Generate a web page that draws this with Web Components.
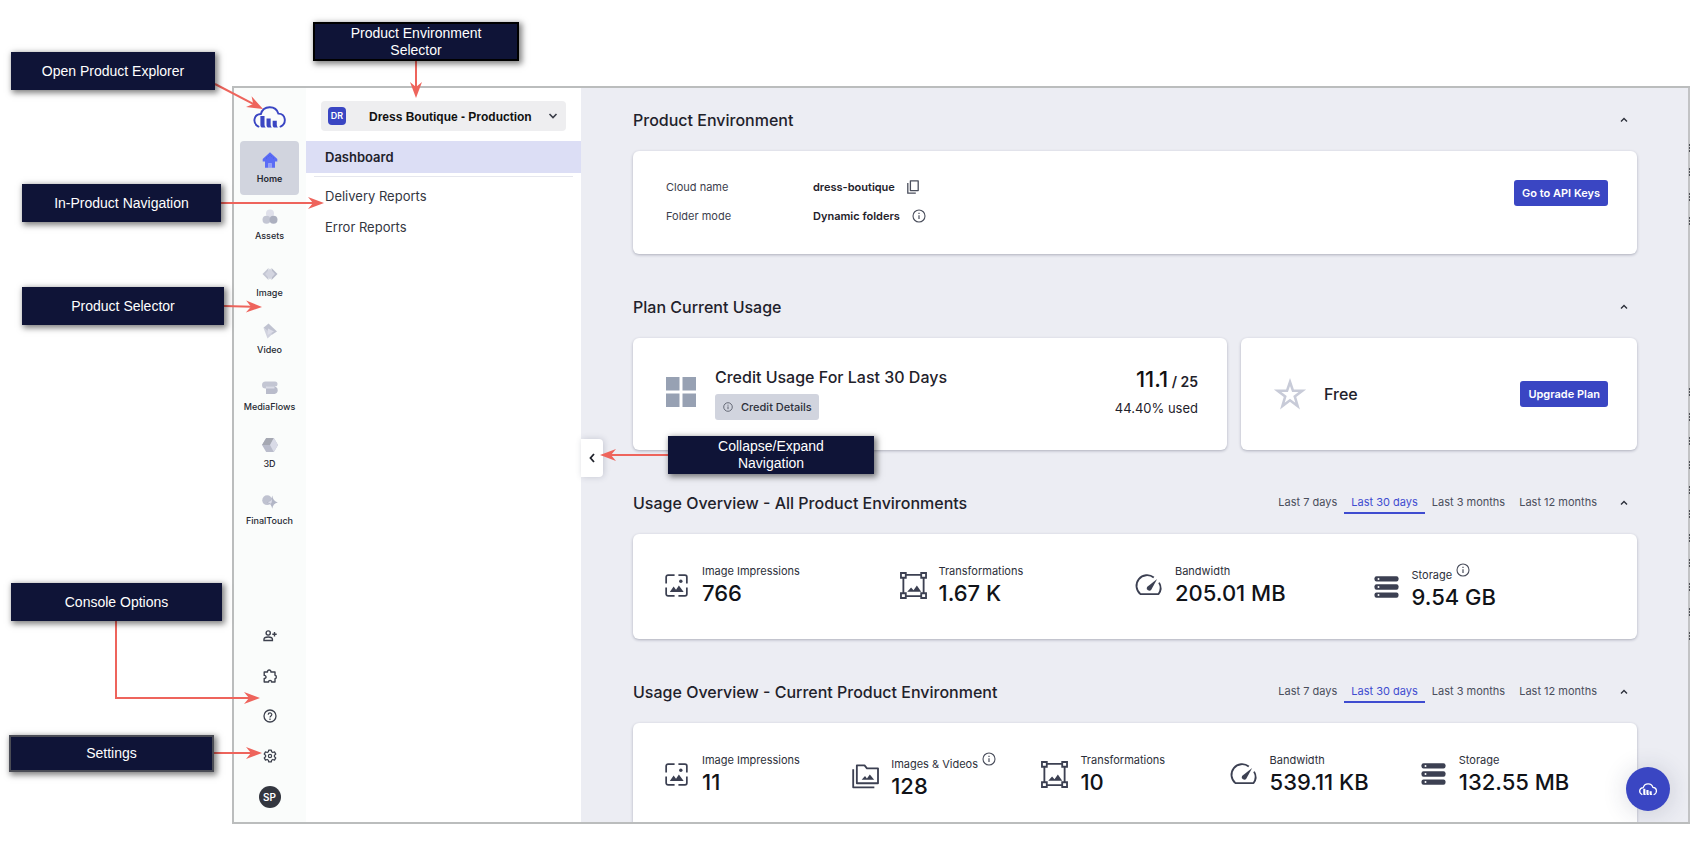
<!DOCTYPE html>
<html lang="en">
<head>
<meta charset="utf-8">
<title>Console dashboard guide</title>
<style>
  body { margin: 0; background: #fff; font-family: Inter, "Liberation Sans", sans-serif; color: #1f222b; }
</style>
</head>
<body>
<guide-stage>
  <app-frame>
    <side-rail slot="rail"></side-rail>
    <nav-panel slot="nav"></nav-panel>
    <section-block heading="Product Environment">
      <info-card><environment-details></environment-details></info-card>
    </section-block>
    <section-block heading="Plan Current Usage">
      <card-row>
        <info-card><credit-usage></credit-usage></info-card>
        <info-card><plan-summary></plan-summary></info-card>
      </card-row>
    </section-block>
    <section-block heading="Usage Overview - All Product Environments">
      <period-tabs slot="tools"></period-tabs>
      <info-card>
        <stat-grid>
          <stat-item icon="impressions" label="Image Impressions" value="766"></stat-item>
          <stat-item icon="transform" label="Transformations" value="1.67 K"></stat-item>
          <stat-item icon="gauge" label="Bandwidth" value="205.01 MB"></stat-item>
          <stat-item icon="storage" label="Storage" value="9.54 GB" info></stat-item>
        </stat-grid>
      </info-card>
    </section-block>
    <section-block heading="Usage Overview - Current Product Environment">
      <period-tabs slot="tools"></period-tabs>
      <info-card>
        <stat-grid>
          <stat-item icon="impressions" label="Image Impressions" value="11"></stat-item>
          <stat-item icon="folder" label="Images &amp; Videos" value="128" info></stat-item>
          <stat-item icon="transform" label="Transformations" value="10"></stat-item>
          <stat-item icon="gauge" label="Bandwidth" value="539.11 KB"></stat-item>
          <stat-item icon="storage" label="Storage" value="132.55 MB"></stat-item>
        </stat-grid>
      </info-card>
    </section-block>
  </app-frame>

  <call-out slot="notes" box="11 52 204 38" path="215,84 263,109">Open Product Explorer</call-out>
  <call-out slot="notes" box="313 22 206 39" edge="#000" path="416,61 416,98">Product Environment Selector</call-out>
  <call-out slot="notes" box="22 184 199 38" path="221,203 324,203">In-Product Navigation</call-out>
  <call-out slot="notes" box="22 287 202 38" path="224,306 262,307">Product Selector</call-out>
  <call-out slot="notes" box="11 583 211 38" path="116,621 116,698 260,698">Console Options</call-out>
  <call-out slot="notes" box="9 735 205 37" edge="#4a4c55" path="214,753 262,753">Settings</call-out>
  <call-out slot="notes" box="668 436 206 38" path="668,455 600,455">Collapse/Expand Navigation</call-out>
</guide-stage>

<script>
const ICONS = {
  logo: ['0 0 34 24', `<g fill="none" stroke="#3a46c3" stroke-width="2" stroke-linecap="round"><path d="M5.500 21.500C-1 18 .2 8.800 8 8.400 10.500-.8 23.500-1.200 26.300 8 34.500 8.300 35 18.500 28.500 21.500"/></g><g fill="#3a46c3"><path d="M7.500 10.500h4.300v9q0 1.400 1.200 3H8.700q-1.200-1-1.200-2.500z"/><path d="M13.900 13h4.300v6.500q0 1.400 1.200 3h-4.300q-1.200-1-1.200-2.500z"/><path d="M20.300 15.300h4.300v4.200q0 1.400 1.200 3h-4.300q-1.200-1-1.200-2.500z"/></g>`],
  cloud: ['0 0 34 24', `<path d="M5.500 21.500C-1 18 .2 8.800 8 8.400 10.500-.8 23.500-1.200 26.300 8 34.500 8.300 35 18.500 28.500 21.500" fill="none" stroke="#fff" stroke-width="2.400" stroke-linecap="round"/><g fill="#fff"><path d="M8 10.500h4v9q0 1.400 1.200 3H9q-1-1-1-2.500z"/><path d="M14 13h4v6.500q0 1.400 1.200 3H15q-1-1-1-2.500z"/><path d="M20 15.300h4v4.200q0 1.400 1.200 3H21q-1-1-1-2.500z"/></g>`],
  home: ['0 0 16 16', `<path d="M8 .3 15.300 7v2.600H13V15.800H9.600v-4.600H6.400v4.600H3V9.600H.7V7z" fill="#5b6cf5"/><path d="M6.400 11.200h3.200v4.600H6.400z" fill="#8f9bfa"/><path d="M4 6.500 8 3l4 3.500" fill="none" stroke="#4050d8" stroke-width=".8" stroke-dasharray="1 1.400"/>`],
  assets: ['0 0 16 16', `<circle cx="8" cy="4.500" r="4" fill="#dfe0ea"/><circle cx="4.500" cy="10.800" r="4" fill="#c3c6d3"/><circle cx="11.500" cy="10.800" r="4" fill="#acb0bf"/>`],
  image: ['0 0 16 16', `<path d="M6.500 2v12L.5 8z" fill="#c3c6d3"/><path d="M9.500 2v12l6-6z" fill="#b7bac9"/><path d="m8 2.500 5 5.500L8 13.500 3 8z" fill="#d3d5e0"/>`],
  video: ['0 0 16 16', `<path d="M6.500.5 15 8.500 9.500 12 1.500 4.800z" fill="#bfc2d0"/><path d="M1.500 4.800 10.500 11 5.500 15.500z" fill="#d0d2de"/><path d="M6 5.500 12 8.500 5.500 12z" fill="#dcdde8"/>`],
  media: ['0 0 16 16', `<path d="M3.500 1.500H13a2 2 0 0 1 0 5L12.500 8.500h-9A3.500 3.500 0 0 1 3.500 1.500z" fill="#c3c6d3"/><path d="M4 8.500l1-2h7.500a3.800 3.800 0 0 1 0 7.500H4z" fill="#b9bccb"/><path d="M4 6.500h8.500v2H4z" fill="#dadce6"/>`],
  cube: ['0 0 16 16', `<path d="M4.200 1h7.600L16 8l-4.200 7H4.200L0 8z" fill="#b9bccb"/><path d="M4.200 1h7.600L8 8H0z" fill="#a5a8b2"/><path d="M11.800 1 16 8l-4.200 7L8 8z" fill="#d9dbe7"/>`],
  touch: ['0 0 18 16', `<circle cx="5.800" cy="6" r="5.500" fill="#bfc2d0"/><path d="M11.500.8q.8 6.200 6.300 7.700-5.500 1-6.300 7.200-.8-6.200-6.300-7.200 5.500-1.500 6.300-7.700z" fill="#b2b6c6"/><path d="M6.500 8.200Q10 7 11 4.500q.6 3-1 5.500z" fill="#dcdde8"/>`],
  addUser: ['0 0 14 12', `<g fill="none" stroke="#3c404d" stroke-width="1.400"><circle cx="5.200" cy="3" r="2.100"/><path d="M1 10.500V9.200C1 7.600 3.600 7 5.200 7s4.200.6 4.200 2.200v1.300z"/><path d="M11.500 2v4.400M9.300 4.200h4.400"/></g>`],
  puzzle: ['0 0 14 14', `<path d="M1.200 3h3.300C4.100.4 8.300.4 7.900 3H12v3.300c1.800.1 1.800 3.300 0 3.400V13H8.500c.2-2.200-3-2.200-2.900 0H1.200V9.500c2.400.2 2.400-3.200 0-3.100z" fill="none" stroke="#3c404d" stroke-width="1.400" stroke-linejoin="round"/>`],
  help: ['0 0 14 14', `<circle cx="7" cy="7" r="6" fill="none" stroke="#3c404d" stroke-width="1.300"/><path d="M5.200 5.700c0-2.300 3.600-2.300 3.600-.1C8.800 7 7 7 7 8.500M7 9.600v1.300" fill="none" stroke="#3c404d" stroke-width="1.200"/>`],
  gear: ['0 0 24 24', `<path d="M9.800 1.800h4.400l.6 3 2 1.200 2.900-1 2.200 3.800-2.300 2v2.400l2.300 2-2.200 3.800-2.900-1-2 1.200-.6 3H9.800l-.6-3-2-1.200-2.900 1-2.200-3.800 2.300-2v-2.400l-2.300-2L4.300 5l2.900 1 2-1.200z" fill="none" stroke="#3c404d" stroke-width="2.200" stroke-linejoin="round"/><circle cx="12" cy="12" r="2.800" fill="none" stroke="#3c404d" stroke-width="2"/>`],
  down: ['0 0 10 6', `<path d="M1.500 1 5 4.500 8.500 1" fill="none" stroke="#3a3d48" stroke-width="1.600"/>`],
  up: ['0 0 8 6', `<path d="M1 4.600 4 1.600 7 4.600" fill="none" stroke="#2c2f3a" stroke-width="1.400"/>`],
  left: ['0 0 6 10', `<path d="M5 1 1.500 5 5 9" fill="none" stroke="#1f222b" stroke-width="1.800"/>`],
  copy: ['0 0 12 14', `<path d="M3.400.8h7.800v9.800H3.400z" fill="none" stroke="#4a4e5c" stroke-width="1.300" stroke-linejoin="round"/><path d="M.8 3v10.200h8" fill="none" stroke="#4a4e5c" stroke-width="1.300"/>`],
  info: ['0 0 14 14', `<circle cx="7" cy="7" r="6" fill="none" stroke="#4a4e5c" stroke-width="1.100"/><path d="M7 6.200V10M7 3.800v1.300" fill="none" stroke="#4a4e5c" stroke-width="1.200"/>`],
  grid: ['0 0 30 30', `<path d="M0 0h13.500v13.500H0zM16.500 0H30v13.500H16.500zM0 16.500h13.500V30H0zM16.500 16.500H30V30H16.500z" fill="#97a1b3"/>`],
  star: ['0 0 30 30', `<path d="m15 3 3 8.800h9.300l-7.500 5.700 2.800 9.500L15 21.300 7.400 27l2.800-9.500L2.700 11.800H12z" fill="none" stroke="#c8cbd8" stroke-width="2.600"/>`],
  impressions: ['0 0 24 24', `<g fill="none" stroke="#3c4052" stroke-width="1.800"><path d="M1.200 10V3.200a2 2 0 0 1 2-2H10M14 1.200h6.800a2 2 0 0 1 2 2V10M22.800 14v6.800a2 2 0 0 1-2 2H14M10 22.800H3.200a2 2 0 0 1-2-2V14"/></g><path d="M5 18.700 9 13l2.500 3.500L14.500 12l5 6.700z" fill="#3c4052"/><circle cx="16.500" cy="7.500" r="1.800" fill="#3c4052"/>`],
  transform: ['0 0 28 28', `<g fill="none" stroke="#3c4052" stroke-width="1.900"><path d="M1 1h5v5H1zM22 1h5v5h-5zM1 22h5v5H1zM22 22h5v5h-5zM6 3h16M6 25h16M3.500 6v16M24.500 6v16"/></g><path d="M7.500 20.500 11.500 16l2.500 3 3.500-5 4.500 6.500z" fill="#3c4052"/>`],
  gauge: ['0 0 26 22', `<path d="M17.500 2.700A11 11 0 0 0 3.500 20h19A11 11 0 0 0 23 8" fill="none" stroke="#3c4052" stroke-width="1.900" stroke-linejoin="round"/><path d="M21 4.300 15 15.300a2.700 2.700 0 0 1-4.600-2.800z" fill="#3c4052"/>`],
  storage: ['0 0 24 22', `<g fill="#3c4052"><rect y=".2" width="24" height="5.400" rx="2"/><rect y="8.300" width="24" height="5.400" rx="2"/><rect y="16.400" width="24" height="5.400" rx="2"/></g><g fill="#fff"><circle cx="4" cy="2.900" r="1"/><circle cx="4" cy="11" r="1"/><circle cx="4" cy="19.100" r="1"/></g>`],
  folder: ['0 0 28 26', `<g fill="none" stroke="#3c4052" stroke-width="1.900" stroke-linejoin="round"><path d="M5 1.500h8l2.500 3H27v15.500H5z"/><path d="M1.200 5.500v18.800h22"/></g><path d="M10 16.500l3.500-4 2 2.500 3-4 4.500 5.500z" fill="#3c4052"/>`]
};

function define(name, css, render) {
  customElements.define(name, class extends HTMLElement {
    constructor() {
      super();
      this.attachShadow({ mode: 'open' });
    }
    connectedCallback() {
      const t = document.createElement('template');
      t.innerHTML = `<style>*{box-sizing:border-box}${css}</style>${render(this)}`;
      this.shadowRoot.replaceChildren(t.content.cloneNode(true));
    }
  });
}

const icon = (name, w, h) => `<ui-icon name="${name}" w="${w}" h="${h || w}"></ui-icon>`;

define('ui-icon', `:host{display:block;flex:none;line-height:0}svg{display:block;overflow:visible}`, el => {
  const [box, body] = ICONS[el.getAttribute('name')];
  return `<svg aria-hidden="true" viewBox="${box}" width="${el.getAttribute('w')}" height="${el.getAttribute('h')}">${body}</svg>`;
});

define('guide-stage', `
  :host{display:flex;flex-direction:column;position:relative;height:100vh;min-height:700px;box-sizing:border-box;padding:86px 0 40px 232px}
`, () => `<slot></slot><slot name="notes"></slot>`);

define('app-frame', `
  :host{display:flex;flex:1;min-height:0;position:relative;border:2px solid #bbbdbd;border-right:0;overflow:hidden;box-sizing:border-box}
  main{flex:1;min-width:0;background:#ecedf3;padding:20px 51px 0 52px;overflow:hidden;display:flex;flex-direction:column;gap:41px}
  .collapse{position:absolute;left:347px;top:351px;width:22px;height:38px;border:0;border-radius:0 4px 4px 0;background:#fff;display:grid;place-items:center;padding:0;box-shadow:1px 0 6px rgba(60,65,90,.22)}
  .help{position:absolute;right:20px;bottom:11px;width:44px;height:44px;border:0;border-radius:50%;background:#3a46c3;display:grid;place-items:center;padding:0;box-shadow:0 2px 24px rgba(40,45,80,.18)}
  .edge{width:2px;flex:none;background:#c2c3c5}
  .edge svg{display:block}
`, () => {
  const ticks = [60, 84, 109, 133, 304, 329, 353, 377, 402, 426, 450, 475, 499, 524, 548];
  return `<slot name="rail"></slot><slot name="nav"></slot><main><slot></slot></main>
  <div class="edge"><svg aria-hidden="true" width="2" height="600">${ticks.map(y => `<path d="M1.500 ${y - 4}v9" stroke="#505258" stroke-dasharray="2 1"/>`).join('')}</svg></div>
  <button class="collapse" aria-label="Collapse navigation">${icon('left', 6, 10)}</button>
  <button class="help" aria-label="Open assistant">${icon('cloud', 18, 13)}</button>`;
});

define('side-rail', `
  :host{display:flex;flex-direction:column;align-items:center;width:72px;flex:none;background:#fafcfb;box-sizing:border-box;padding:18px 7px 14px 6px}
  .logo{display:block;margin-bottom:12px}
  nav{display:flex;flex-direction:column;gap:3px;align-self:stretch}
  .options{margin-top:auto;display:flex;flex-direction:column;align-items:center;gap:16px}
  button{border:0;background:none;padding:0;width:24px;height:24px;display:grid;place-items:center}
  .avatar{background:#33363f;color:#fff;border-radius:50%;width:22px;height:22px;margin-top:2px;font:600 10px/22px Inter,sans-serif}
`, () => `
  <a class="logo" href="#explorer" aria-label="Open product explorer">${icon('logo', 33, 23)}</a>
  <nav aria-label="Products">
    <rail-item icon="home" active>Home</rail-item>
    <rail-item icon="assets">Assets</rail-item>
    <rail-item icon="image">Image</rail-item>
    <rail-item icon="video">Video</rail-item>
    <rail-item icon="media">MediaFlows</rail-item>
    <rail-item icon="cube">3D</rail-item>
    <rail-item icon="touch">FinalTouch</rail-item>
  </nav>
  <div class="options">
    <button aria-label="Invite users">${icon('addUser', 14, 12)}</button>
    <button aria-label="Integrations">${icon('puzzle', 14)}</button>
    <button aria-label="Help">${icon('help', 14)}</button>
    <button aria-label="Settings">${icon('gear', 14)}</button>
    <button class="avatar">SP</button>
  </div>`);

define('rail-item', `
  :host{display:block}
  a{display:flex;flex-direction:column;align-items:center;gap:4px;height:54px;padding-top:11px;border-radius:4px;color:#262932;text-decoration:none;font-weight:500;font-size:9px;line-height:14px;white-space:nowrap}
  :host([active]) a{background:#d1d4de;font-weight:600}
`, el => `<a href="#product">${icon(el.getAttribute('icon'), 16)}<slot></slot></a>`);

define('nav-panel', `
  :host{display:block;width:275px;flex:none;background:#fff;font-size:13px}
  .picker{display:flex;align-items:center;height:30px;margin:13px 15px 0;padding:0 8px 0 7px;border-radius:4px;background:#eeeef0}
  .badge{width:18px;height:18px;border-radius:4px;background:#3a46c3;color:#fff;font-weight:600;font-size:9px;line-height:18px;text-align:center}
  select{appearance:none;border:0;background:none;flex:1;min-width:0;margin:0;padding:2px 0 0 23px;font:bold 12px/18px "Liberation Sans",Arial,sans-serif;color:#111}
  ul{list-style:none;margin:10px 0 0;padding:0}
  a{display:block;line-height:31px;padding:0 19px;color:#33363f;text-decoration:none}
  .current a{line-height:32px;background:#dcdef5;font-weight:600;color:#1f222b}
  hr{border:0;height:1px;background:#e6e7ee;margin:3px 8px 4px}
`, () => `
  <label class="picker"><span class="badge">DR</span>
    <select aria-label="Product environment"><option>Dress Boutique - Production</option></select>${icon('down', 10, 6)}
  </label>
  <nav aria-label="Home"><ul>
    <li class="current"><a href="#dashboard" aria-current="page">Dashboard</a><hr></li>
    <li><a href="#delivery">Delivery Reports</a></li>
    <li><a href="#errors">Error Reports</a></li>
  </ul></nav>`);

define('section-block', `
  :host{display:block;flex:none}
  header{display:flex;align-items:center;height:24px;margin-bottom:19px}
  h2{margin:0 auto 0 0;font-weight:500;font-size:16px;line-height:24px;color:#1f222b}
  button{border:0;background:none;width:24px;height:24px;margin-right:1px;padding:0;display:grid;place-items:center}
`, el => `<header><h2>${el.getAttribute('heading')}</h2><slot name="tools"></slot><button aria-label="Collapse section">${icon('up', 8, 6)}</button></header><slot></slot>`);

define('info-card', `
  :host{display:block;background:#fff;border-radius:6px;box-shadow:0 1px 3px rgba(40,45,70,.32)}
`, () => `<slot></slot>`);

define('card-row', `
  :host{display:grid;grid-template-columns:3fr 2fr;gap:14px}
`, () => `<slot></slot>`);

const BUTTON = `.primary{border:0;border-radius:3px;background:#3a46c3;color:#fff;font:600 11px/26px Inter,sans-serif;padding:0 8px;white-space:nowrap}`;

define('environment-details', `
  :host{display:flex;align-items:flex-start;justify-content:space-between;padding:28px 29px 30px 33px;font-size:11px}
  dl{margin:0;display:grid;grid-template-columns:147px auto;row-gap:13px;line-height:16px}
  dt{color:#3c404d}
  dd{margin:0;font-weight:600;display:flex;gap:12px;align-items:center}
  button.plain{border:0;background:none;padding:0}
  .primary{margin-top:1px}
  ${BUTTON}
`, () => `
  <dl>
    <dt>Cloud name</dt><dd>dress-boutique <button class="plain" aria-label="Copy cloud name">${icon('copy', 12, 14)}</button></dd>
    <dt>Folder mode</dt><dd>Dynamic folders <button class="plain" aria-label="About folder mode">${icon('info', 14)}</button></dd>
  </dl>
  <button class="primary">Go to API Keys</button>`);

define('credit-usage', `
  :host{display:flex;align-items:center;height:112px;padding:0 29px 4px 33px;gap:19px;box-sizing:border-box}
  .title{flex:1;min-width:0}
  h3{margin:0 0 5px;font-weight:500;font-size:16px;line-height:24px;color:#1f222b}
  button{display:flex;align-items:center;gap:8px;border:0;border-radius:3px;background:#d1d4de;height:26px;padding:0 7px 0 8px;font:500 11px/26px Inter,sans-serif;color:#2c2f3a}
  .amount{text-align:right}
  .total{font-weight:600;font-size:14px;line-height:28px}
  .total b{font-weight:500;font-size:22px;color:#111}
  .used{font-size:13px;line-height:24px}
`, () => `
  ${icon('grid', 30)}
  <div class="title"><h3>Credit Usage For Last 30 Days</h3><button>${icon('info', 10)}Credit Details</button></div>
  <div class="amount"><div class="total"><b>11.1</b> / 25</div><div class="used">44.40% used</div></div>`);

define('plan-summary', `
  :host{display:flex;align-items:center;height:112px;padding:0 29px 0 34px;gap:19px;box-sizing:border-box}
  span{flex:1;font-weight:500;font-size:16px;line-height:24px;color:#1f222b}
  ${BUTTON}
`, () => `${icon('star', 30)}<span>Free</span><button class="primary">Upgrade Plan</button>`);

define('period-tabs', `
  :host{display:flex;margin-right:8px}
  a{display:block;padding:0 7px;font-size:11px;line-height:20px;color:#4a4e5c;text-decoration:none;border-bottom:2px solid transparent;white-space:nowrap}
  a[aria-current]{color:#3f4cd0;border-color:#3f4cd0}
`, () => `<a href="#7d">Last 7 days</a><a href="#30d" aria-current="true">Last 30 days</a><a href="#3m">Last 3 months</a><a href="#12m">Last 12 months</a>`);

define('stat-grid', `
  :host{display:grid;grid-auto-flow:column;grid-auto-columns:minmax(0,1fr);align-items:start;padding:29px 26px 28px 32px}
`, () => `<slot></slot>`);

define('stat-item', `
  :host{display:flex;align-items:center;gap:14px}
  .pic{width:23px;display:flex;justify-content:center;flex:none}
  .label{display:flex;align-items:flex-end;gap:4px;font-size:11px;line-height:16px;color:#2c2f3a;white-space:nowrap}
  :host([info]) .label{height:20px}
  :host([info]) .label ui-icon{align-self:flex-start}
  .value{font-weight:500;font-size:22px;line-height:28px;color:#111318;white-space:nowrap}
`, el => {
  const sizes = { impressions: [23, 23], transform: [27, 27], gauge: [25, 21], storage: [25, 22], folder: [27, 25] };
  const name = el.getAttribute('icon');
  return `<div class="pic">${icon(name, ...sizes[name])}</div><div>
    <div class="label">${el.getAttribute('label').replace('&', '&amp;')}${el.hasAttribute('info') ? icon('info', 14) : ''}</div>
    <div class="value">${el.getAttribute('value')}</div></div>`;
});

/* box = "left top width height", path = points of the arrow in stage coordinates, the last being its tip. */
define('call-out', `
  :host{display:block}
  .box{position:absolute;display:flex;align-items:center;justify-content:center;background:#0f1437;color:#fff;border:2px solid #0f1437;text-align:center;font:14px/17px "Liberation Sans",Arial,sans-serif;box-shadow:2px 2px 6px 1px rgba(0,0,0,.5)}
  .box span{max-width:140px}
  .box.wide span{max-width:none}
  svg{position:absolute;left:0;top:0;width:100%;height:100%;pointer-events:none}
`, el => {
  const [x, y, w, h] = el.getAttribute('box').split(' ');
  const pts = el.getAttribute('path').split(' ').map(p => p.split(',').map(Number));
  const [tx, ty] = pts[pts.length - 1], [px, py] = pts[pts.length - 2];
  const angle = Math.atan2(ty - py, tx - px);
  const end = [tx - 10 * Math.cos(angle), ty - 10 * Math.sin(angle)];
  const line = [...pts.slice(0, -1), end].map(p => p.join(',')).join(' ');
  const wide = el.textContent.length < 24 ? 'wide' : '';
  return `<svg aria-hidden="true"><polyline points="${line}" fill="none" stroke="#ee645c" stroke-width="2"/>
    <path d="M0 0-16-6-11 0-16 6z" fill="#ee645c" transform="translate(${tx} ${ty}) rotate(${angle * 180 / Math.PI})"/></svg>
    <div class="box ${wide}" style="left:${x}px;top:${y}px;width:${w}px;height:${h}px;border-color:${el.getAttribute('edge') || '#0f1437'}"><span><slot></slot></span></div>`;
});
</script>
</body>
</html>
